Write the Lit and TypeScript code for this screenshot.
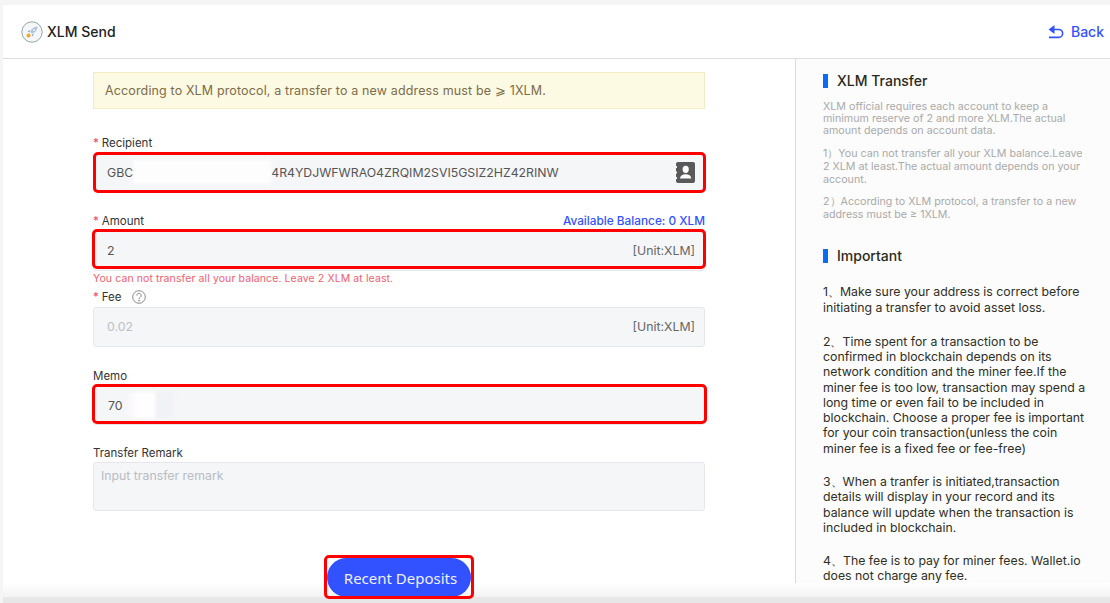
import { LitElement, html, css } from "lit";
import { customElement } from "lit/decorators.js";

@customElement("app-root")
export class AppRoot extends LitElement {
  static styles = css`
    :host { display: block; width: 1110px; height: 603px; overflow: hidden; background: #f5f5f5; font-family: Inter, "Noto Sans", sans-serif; position: relative; }
    * { box-sizing: border-box; }
    .panel { margin: 5px 0 0 3px; height: 598px; background: #fff; display: flex; flex-direction: column; }
    .head { height: 54px; flex: none; display: flex; align-items: center; justify-content: space-between; padding: 0 6px 0 18px; border-bottom: 1px solid #dfdfe2; }
    .title { display: flex; align-items: center; gap: 4px; font-size: 14px; font-weight: 500; color: #222; }
    .back { display: flex; align-items: center; gap: 7px; color: #3352ff; font-size: 14px; font-weight: 500; }
    .body { display: flex; flex: 1; min-height: 0; }
    .main { width: 793px; flex: none; padding: 13px 90px 0; display: flex; flex-direction: column; border-right: 1px solid #dcdcdf; }
    .alert { height: 37px; background: #fdfae3; border: 1px solid #f3ebc6; color: #7c6c48; font-size: 12.5px; display: flex; align-items: center; padding-left: 11px; margin-bottom: 24px; letter-spacing: 0.14px; }
    .label { height: 20px; display: flex; align-items: center; justify-content: space-between; font-size: 11.5px; color: #333; }
    .plain { padding-top: 1px; }
    .plain2 { padding-top: 2px; }
    .label b { font-weight: 400; color: #f0485a; margin-right: 3px; }
    .fee { display: flex; align-items: center; }
    .help { margin-left: 10px; }
    .avail { color: #3352ff; font-weight: 500; font-size: 11.8px; }
    .input { position: relative; height: 40px; background: #f5f6f8; border: 1px solid #e6e7ec; border-radius: 3px; display: flex; align-items: center; justify-content: space-between; padding: 0 9px 2px 13px; font-size: 12.3px; color: #555; margin-bottom: 18px; }
    .val { display: flex; align-items: center; }
    .mask { display: block; height: 24px; background: #fdfdfe; filter: blur(1.5px); }
    .m1 { width: 138px; }
    .memo-mask { width: 50px; height: 26px; margin-left: 4px; border-radius: 8px; background: linear-gradient(90deg, #fbf6fb 0, #fefeff 25%, #fefeff 55%, #f1f2f5 58%, #f1f2f5 90%, #fbf6fb 100%); }
    .disabled { color: #bcc0c8; }
    .unit { color: #666; }
    .tight { margin-bottom: 0; }
    .short { margin-bottom: 17px; padding-bottom: 0; padding-left: 14px; }
    .err { height: 16px; font-size: 10.5px; color: #f2606f; line-height: 16px; letter-spacing: 0.1px; }
    .area { height: 49px; align-items: flex-start; padding: 5px 7px; color: #b9bcc4; margin-bottom: 0; }
    .mark { position: absolute; border: 3px solid #f00; border-radius: 5px; pointer-events: none; }
    .mk-rec { inset: -2px -2px -1px -1px; }
    .mk-amt { inset: -3px -2px 1px -2px; }
    .mk-memo { inset: -2px -3px 0 -2px; }
    .actions { display: flex; justify-content: center; margin-top: 47px; position: relative; z-index: 2; }
    .btn { position: relative; width: 144px; height: 39px; border-radius: 20px; background: #3352ff; color: #eef0ff; display: flex; align-items: center; justify-content: center; padding-left: 3px; font-family: "Noto Sans", sans-serif; font-size: 15px; }
    .mk-btn { inset: -3px -3px -2px -3px; }
    .side { flex: 1; min-width: 0; background: #fcfcfc; padding: 0 24px 0 27px; color: #aaa; font-size: 10.7px; line-height: 12.2px; overflow: hidden; }
    .h { display: flex; align-items: center; gap: 9px; font-size: 14px; font-weight: 500; color: #2a2a1c; height: 20px; margin-top: 12px; }
    .h::before { content: ""; width: 5px; height: 14px; background: #0a6cf5; }
    .h2 { margin-top: 25px; }
    .side p { margin: 0; }
    .side .p0 { margin-top: 10px; }
    .side .p1 { margin-top: 9px; line-height: 13px; }
    .side .imp { color: #2f2f25; font-size: 12.3px; line-height: 15.3px; margin-top: 18px; }
    .side .imp0 { line-height: 16px; }
    .bar { position: absolute; left: 3px; right: 0; bottom: 0; height: 20px; z-index: 1; background: linear-gradient(180deg, #ffffff 0, #f3f3f3 14px, #e7e7e7 14px, #e7e7e7 20px); }
  `;

  render() {
    return html`
      <div class="panel">
        <div class="head">
          <div class="title">
            <svg width="22" height="22" viewBox="0 0 22 22"><circle cx="11" cy="11" r="10.2" fill="#f4f6f8" stroke="#98a4ae" stroke-width="1"/><path d="M16.500 5.500c-3.500.2-5.800 2-7.300 5.300l2 2c3.300-1.500 5.100-3.800 5.300-7.300z" fill="#aec4e0"/><path d="M9 9l-2.500 1.500 2 1zM13 13l-1.500 2.500-1-2z" fill="#8ea6c6"/><circle cx="13" cy="9" r="1" fill="#eef3f9"/><circle cx="7.500" cy="14.500" r="2" fill="#f5a623"/></svg>
            XLM Send
          </div>
          <div class="back">
            <svg width="16" height="14" viewBox="0 0 16 14" fill="none" stroke="#3352ff" stroke-width="1.600"><path d="M3 4.500h7.700a3.800 3.800 0 0 1 0 7.900H1"/><path d="M6.500 0v9L.5 4.500z" fill="#3352ff" stroke="none"/></svg>
            Back
          </div>
        </div>
        <div class="body">
          <div class="main">
            <div class="alert">According to XLM protocol, a transfer to a new address must be ⩾ 1XLM.</div>
            <div class="label"><span><b>*</b>Recipient</span></div>
            <div class="input">
              <span class="val">GBC<span class="mask m1"></span>4R4YDJWFWRAO4ZRQIM2SVI5GSIZ2HZ42RINW</span>
              <svg width="19" height="21" viewBox="0 0 19 21"><rect width="19" height="21" rx="2" fill="#595959"/><path d="M0 4h1v2H0zM0 9.500h1v2H0zM0 15h1v2H0z" fill="#f5f6f8"/><ellipse cx="9.700" cy="7.300" rx="3.100" ry="3.600" fill="#fff"/><path d="M4 16.500c.3-3 2.700-4.300 5.700-4.300s5.300 1.300 5.600 4.300z" fill="#fff"/></svg>
              <span class="mark mk-rec"></span>
            </div>
            <div class="label"><span><b>*</b>Amount</span><span class="avail">Available Balance: 0 XLM</span></div>
            <div class="input tight">
              <span>2</span><span class="unit">[Unit:XLM]</span>
              <span class="mark mk-amt"></span>
            </div>
            <div class="err">You can not transfer all your balance. Leave 2 XLM at least.</div>
            <div class="label"><span class="fee"><b>*</b>Fee
              <svg class="help" width="14" height="14" viewBox="0 0 14 14" fill="none" stroke="#8a8a8a"><circle cx="7" cy="7" r="6.300"/><path d="M4.800 5.500a2.200 2.200 0 1 1 3.300 1.900c-.8.500-1.100.9-1.100 1.700"/><circle cx="7" cy="10.700" r=".5"/></svg></span></div>
            <div class="input">
              <span class="disabled">0.02</span><span class="unit">[Unit:XLM]</span>
            </div>
            <div class="label plain"><span>Memo</span></div>
            <div class="input short">
              <span class="val">70<span class="mask memo-mask"></span></span>
              <span class="mark mk-memo"></span>
            </div>
            <div class="label plain2"><span>Transfer Remark</span></div>
            <div class="input area">Input transfer remark</div>
            <div class="actions"><div class="btn">Recent Deposits<span class="mark mk-btn"></span></div></div>
          </div>
          <div class="side">
            <div class="h">XLM Transfer</div>
            <p class="p0">XLM official requires each account to keep a minimum reserve of 2 and more XLM.The actual amount depends on account data.</p>
            <p class="p1">1）You can not transfer all your XLM balance.Leave 2 XLM at least.The actual amount depends on your account.</p>
            <p class="p1">2）According to XLM protocol, a transfer to a new address must be ≥ 1XLM.</p>
            <div class="h h2">Important</div>
            <p class="imp imp0">1、Make sure your address is correct before initiating a transfer to avoid asset loss.</p>
            <p class="imp">2、Time spent for a transaction to be confirmed in blockchain depends on its network condition and the miner fee.If the miner fee is too low, transaction may spend a long time or even fail to be included in blockchain. Choose a proper fee is important for your coin transaction(unless the coin miner fee is a fixed fee or fee-free)</p>
            <p class="imp">3、When a tranfer is initiated,transaction details will display in your record and its balance will update when the transaction is included in blockchain.</p>
            <p class="imp">4、The fee is to pay for miner fees. Wallet.io does not charge any fee.</p>
          </div>
        </div>
      </div>
      <div class="bar"></div>
    `;
  }
}
